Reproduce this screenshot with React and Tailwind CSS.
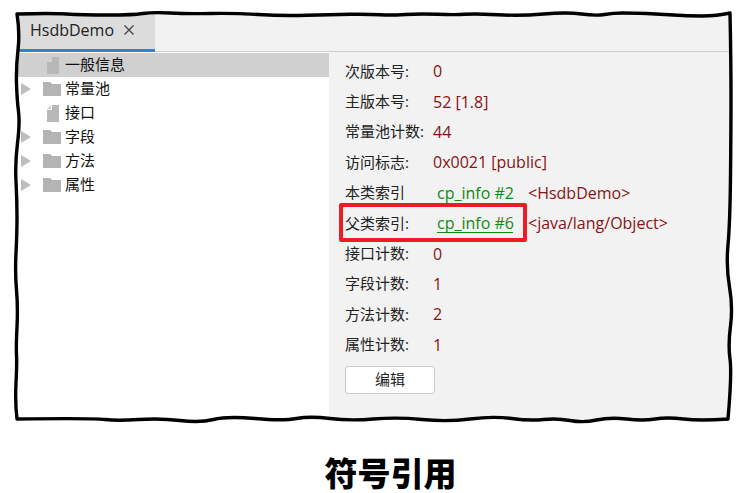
import React from "react";

const pts = [
  [17,14],[50,13],[83,15],[133,15],[153,12],[187,14],[233,13],[283,16],[330,14.5],[370,14],[390,15.5],[420,13.5],[455,15],[475,13.5],[520,16],[567,12],[596,16],[613,13],[633,13],[660,14],[687,16],[717,16],[730,13],
  [731,60],[731,130],[730,223],[726,267],[733,307],[728,345],[732,373],[728,419],
  [700,421],[667,417],[643,421],[610,417],[583,423],[557,418],[530,421],[493,416],[447,422],[397,417],[350,421],[310,416],[283,421],[227,416],[200,423],[160,418],[117,421],[93,418],[17,419],
  [15,403],[17,363],[16,347],[18,307],[15,273],[17,233],[17,200],[15,163],[20,123],[17,100],[16,67],[20,33],
];
const corners = new Set([0, 22, 30, 49]);
function buildPath() {
  let d = `M${pts[0][0]} ${pts[0][1]}`;
  const n = pts.length;
  for (let i = 1; i <= n; i++) {
    const p = pts[i % n];
    const q = pts[(i + 1) % n];
    if (corners.has(i % n)) {
      d += ` L${p[0]} ${p[1]}`;
    } else if (corners.has((i + 1) % n)) {
      d += ` Q${p[0]} ${p[1]} ${q[0]} ${q[1]}`;
      i++;
    } else {
      d += ` Q${p[0]} ${p[1]} ${(p[0] + q[0]) / 2} ${(p[1] + q[1]) / 2}`;
    }
  }
  return d + " Z";
}
const torn = buildPath();

const FileIcon = () => (
  <svg width="14" height="18" viewBox="0 0 14 18" className="shrink-0">
    <path d="M6 1 L13 1 L13 18 L1 18 L1 6 L6 6 Z" fill="#b8b8b8" />
    <path d="M5 1 L5 5 L1 5 Z" fill="#cfcfcf" />
  </svg>
);
const Folder = () => (
  <svg width="18" height="15" viewBox="0 0 18 15" className="shrink-0">
    <path d="M0 1 L7 1 L9 3 L18 3 L18 15 L0 15 Z" fill="#b4b4b4" />
  </svg>
);
const Arrow = () => (
  <svg width="10" height="12" viewBox="0 0 10 12" className="shrink-0">
    <path d="M0 0 L10 6 L0 12 Z" fill="#bdbdbd" />
  </svg>
);

const tree = [
  { t: "一般信息", k: "file", sel: true },
  { t: "常量池", k: "folder" },
  { t: "接口", k: "file" },
  { t: "字段", k: "folder" },
  { t: "方法", k: "folder" },
  { t: "属性", k: "folder" },
];

const Row = ({ label, children }) => (
  <div className="flex h-[30.4px] items-center">{label}{children}</div>
);
const L = ({ children }) => <span className="w-[88px] shrink-0 text-[#222]">{children}</span>;
const V = ({ children }) => <span className="text-[16px] text-[#8a1212]">{children}</span>;
const G = ({ children, u }) => (
  <span className={`ml-[4px] w-[91px] shrink-0 text-[16px] text-[#118a11] ${u ? "relative" : ""}`}>
    {children}
    {u ? <span className="absolute left-0 top-[17px] h-[1px] w-[76px] bg-[#118a11]" /> : null}
  </span>
);

export default function App() {
  return (
    <div
      className="relative h-[493px] w-[737px] bg-white pl-[14px] pt-[10px] text-[15px] leading-none"
      style={{ fontFamily: '"Open Sans","Noto Sans CJK SC",sans-serif' }}
    >
      <div className="flex h-[414px] w-[720px] flex-col bg-[#f2f2f2]">
        <div className="flex h-[42px] shrink-0 border-b border-[#cfcfcf]">
          <div className="ml-[3px] flex h-[42px] w-[138px] items-center border-b-[3px] border-[#3b7fc4] bg-[#dcdcdc] pl-[13px] pt-[1px] text-[16px] text-[#222]">
            <span className="w-[94px]">HsdbDemo</span>
            <svg width="10" height="10" viewBox="0 0 10 10">
              <path d="M0.5 0.5 L9.5 9.5 M9.5 0.5 L0.5 9.5" stroke="#444" strokeWidth="1.3" />
            </svg>
          </div>
        </div>
        <div className="flex min-h-0 flex-1">
          <div className="w-[315px] shrink-0 bg-white pt-[1px]">
            {tree.map((r) => (
              <div key={r.t} className={`flex h-6 items-center pb-[1px] ${r.sel ? "bg-[#d0d0d0]" : ""}`}>
                <div className="ml-[7px] w-[21px]">{r.k === "folder" ? <Arrow /> : null}</div>
                <div className={`flex w-[22px] justify-center ${r.k === "folder" ? "pr-[3px]" : "pr-[1px]"}`}>{r.k === "folder" ? <Folder /> : <FileIcon />}</div>
                <span className="ml-[1px] text-[#111]">{r.t}</span>
              </div>
            ))}
          </div>
          <div className="flex-1 pl-4 pt-[4px]">
            <Row label={<L>次版本号:</L>}><V>0</V></Row>
            <Row label={<L>主版本号:</L>}><V>52 [1.8]</V></Row>
            <Row label={<L>常量池计数:</L>}><V>44</V></Row>
            <Row label={<L>访问标志:</L>}><V>0x0021 [public]</V></Row>
            <Row label={<L>本类索引</L>}><G>cp_info #2</G><V>&lt;HsdbDemo&gt;</V></Row>
            <Row label={<L>父类索引:</L>}><G u>cp_info #6</G><V>&lt;java/lang/Object&gt;</V></Row>
            <Row label={<L>接口计数:</L>}><V>0</V></Row>
            <Row label={<L>字段计数:</L>}><V>1</V></Row>
            <Row label={<L>方法计数:</L>}><V>2</V></Row>
            <Row label={<L>属性计数:</L>}><V>1</V></Row>
            <button className="mt-[6px] flex h-[28px] w-[90px] items-center justify-center rounded-[3px] border border-[#cdcdcd] bg-white text-[#222]">
              编辑
            </button>
          </div>
        </div>
      </div>
      <div
        className="mt-[29px] pl-[30px] text-center text-[33px] font-black leading-[38px] text-black"
        style={{ fontFamily: '"Noto Sans CJK SC",sans-serif' }}
      >
        符号引用
      </div>
      <svg className="pointer-events-none absolute left-0 top-0" width="737" height="440" viewBox="0 0 737 440">
        <path d={`M0 0 H737 V440 H0 Z ${torn}`} fill="#fff" fillRule="evenodd" />
        <path d={torn} fill="none" stroke="#000" strokeWidth="3.4" strokeLinejoin="round" />
      </svg>
      <div className="absolute left-[339px] top-[203px] h-[39px] w-[188px] rounded-[2px] border-[4px] border-[#ed1c24]" />
    </div>
  );
}
